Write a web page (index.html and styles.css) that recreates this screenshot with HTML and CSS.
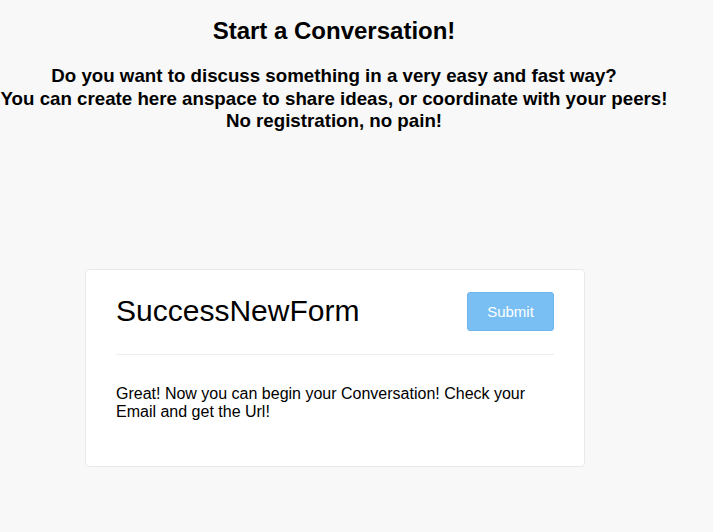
FILE: index.html
```html
<!DOCTYPE html>
<html>
<head>
<meta charset="utf-8">
<link rel="stylesheet" href="styles.css">
</head>
<body>
<div class="page">
  <header class="intro">
    <h1 class="intro-title">Start a Conversation!</h1>
    <p class="intro-text">Do you want to discuss something in a very easy and fast way?<br>You can create here anspace to share ideas, or coordinate with your peers!<br>No registration, no pain!</p>
  </header>
  <section class="card">
    <div class="card-head">
      <h2 class="card-title">SuccessNewForm</h2>
      <button class="btn-submit" type="button">Submit</button>
    </div>
    <div class="card-body">
      <p class="card-text">Great! Now you can begin your Conversation! Check your Email and get the Url!</p>
    </div>
  </section>
</div>
</body>
</html>
```
FILE: styles.css
```css
html, body {
  margin: 0;
  padding: 0;
  background: #f8f8f8;
}
body {
  font-family: "Liberation Sans", Arial, sans-serif;
  color: #000;
}
.page {
  width: 668px;
}
.intro {
  text-align: center;
}
.intro-title {
  margin: 17px 0 0;
  font-size: 24px;
  line-height: 28px;
  font-weight: bold;
}
.intro-text {
  margin: 20px 0 0;
  font-size: 18.72px;
  line-height: 22.5px;
  font-weight: bold;
  white-space: nowrap;
}
.card {
  margin: 136px 0 0 85px;
  width: 438px;
  padding: 22px 30px 45px;
  background: #fff;
  border: 1px solid #e9e9e9;
  border-radius: 4px;
}
.card-head {
  display: flex;
  align-items: center;
  justify-content: space-between;
  padding-bottom: 23px;
  border-bottom: 1px solid #eeeeee;
}
.card-title {
  margin: 0;
  font-size: 30px;
  font-weight: normal;
  line-height: 36px;
}
.btn-submit {
  width: 87px;
  height: 39px;
  background: #79bff3;
  border: 1px solid #6fb5ea;
  border-radius: 3px;
  color: #fff;
  font-family: "Liberation Sans", Arial, sans-serif;
  font-size: 15px;
  padding: 0;
}
.card-body {
  padding-top: 30px;
}
.card-text {
  margin: 0;
  font-size: 16px;
  line-height: 18px;
}
```
